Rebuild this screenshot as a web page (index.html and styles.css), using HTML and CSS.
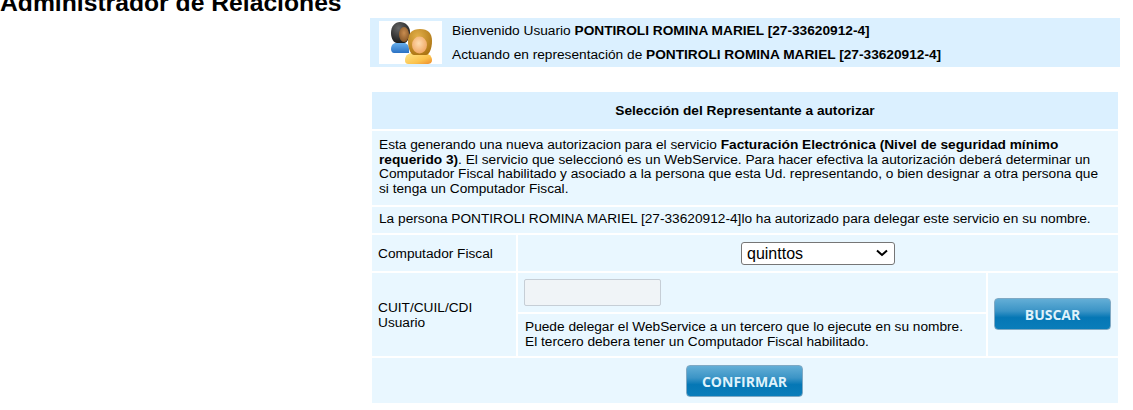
FILE: index.html
```html
<!DOCTYPE html>
<html lang="es">
<head>
<meta charset="utf-8">
<title>Administrador de Relaciones</title>
<link rel="stylesheet" href="styles.css">
</head>
<body>
<h1 class="page-title">Administrador de Relaciones</h1>
<main class="content">
  <section class="user-bar">
    <div class="avatar">
      <svg width="63" height="43" viewBox="0 0 63 43" aria-hidden="true">
        <defs>
          <linearGradient id="blueBody" x1="0" y1="0" x2="0" y2="1"><stop offset="0" stop-color="#6db4ef"/><stop offset="1" stop-color="#2b72c4"/></linearGradient>
          <linearGradient id="yellowBody" x1="0" y1="0" x2="1" y2="1"><stop offset="0" stop-color="#ffe98f"/><stop offset="0.65" stop-color="#fbc24c"/><stop offset="1" stop-color="#ec8a2c"/></linearGradient>
          <radialGradient id="darkHair" cx="0.4" cy="0.3" r="0.8"><stop offset="0" stop-color="#666"/><stop offset="1" stop-color="#111"/></radialGradient>
          <radialGradient id="goldHair" cx="0.4" cy="0.3" r="0.8"><stop offset="0" stop-color="#e3b04a"/><stop offset="1" stop-color="#a8700f"/></radialGradient>
          <radialGradient id="faceDark" cx="0.5" cy="0.4" r="0.7"><stop offset="0" stop-color="#c98d50"/><stop offset="1" stop-color="#7d4f22"/></radialGradient>
          <radialGradient id="faceLight" cx="0.45" cy="0.4" r="0.7"><stop offset="0" stop-color="#ffdcb0"/><stop offset="1" stop-color="#ee9f58"/></radialGradient>
        </defs>
        <path d="M12 28c0-5 4-7 9-7s9 2 9 7v4H15c-2 0-3-2-3-4z" fill="url(#blueBody)"/>
        <path d="M12 12C12 5 16 1 21 1s10 4 10 10c0 6-3 11-6 11h-7c-3 0-6-4-6-10z" fill="url(#darkHair)"/>
        <ellipse cx="25" cy="13.500" rx="5" ry="7.500" fill="url(#faceDark)"/>
        <path d="M26 39c0-5 4-8 13-8s14 3 14 8c0 3-2 4-5 4H30c-3 0-4-1-4-4z" fill="url(#yellowBody)"/>
        <path d="M29 20c0-8 4-12 12-12s12 4 12 12c0 8-3 14-6 14H35c-3 0-6-6-6-14z" fill="url(#goldHair)"/>
        <ellipse cx="40.500" cy="24" rx="7.500" ry="8.500" fill="url(#faceLight)"/>
      </svg>
    </div>
    <div class="user-lines">
      <p>Bienvenido Usuario <strong>PONTIROLI ROMINA MARIEL [27-33620912-4]</strong></p>
      <p>Actuando en representación de <strong>PONTIROLI ROMINA MARIEL [27-33620912-4]</strong></p>
    </div>
  </section>

  <section class="form-grid">
    <div class="cell heading span-all">Selección del Representante a autorizar</div>
    <div class="cell text span-all desc">Esta generando una nueva autorizacion para el servicio <strong>Facturación Electrónica (Nivel de seguridad mínimo requerido 3)</strong>. El servicio que seleccionó es un WebService. Para hacer efectiva la autorización deberá determinar un Computador Fiscal habilitado y asociado a la persona que esta Ud. representando, o bien designar a otra persona que si tenga un Computador Fiscal.</div>
    <div class="cell text span-all note">La persona PONTIROLI ROMINA MARIEL [27-33620912-4]lo ha autorizado para delegar este servicio en su nombre.</div>
    <div class="cell label">Computador Fiscal</div>
    <div class="cell select-cell">
      <select class="select"><option>quinttos</option></select>
    </div>
    <div class="cell label label-cuit">CUIT/CUIL/CDI<br>Usuario</div>
    <div class="middle">
      <div class="cell input-cell"><input class="input" type="text" disabled></div>
      <div class="cell help">Puede delegar el WebService a un tercero que lo ejecute en su nombre.<br>El tercero debera tener un Computador Fiscal habilitado.</div>
    </div>
    <div class="cell button-cell"><button class="btn" type="button">BUSCAR</button></div>
    <div class="cell confirm-cell span-all"><button class="btn" type="button">CONFIRMAR</button></div>
  </section>
</main>
</body>
</html>
```

FILE: styles.css
```css
* { box-sizing: border-box; }
html, body { margin: 0; padding: 0; }
body {
  background: #fff;
  color: #000;
  font-family: "Liberation Sans", Arial, sans-serif;
  font-size: 13.7px;
  height: 410px;
  overflow: hidden;
  display: flex;
  align-items: flex-start;
}
.page-title {
  flex: 0 0 370px;
  margin: -11px 0 0;
  font-size: 24.7px;
  font-weight: 700;
  line-height: 28px;
  white-space: nowrap;
}
.content {
  flex: 0 0 750px;
  padding-top: 18px;
}
.user-bar {
  display: flex;
  height: 49px;
  width: 750px;
  align-items: center;
  padding-left: 9px;
  background: #dbf0ff;
}
.avatar { width: 63px; height: 43px; background: #fff; flex: none; }
.avatar svg { display: block; }
.user-lines { margin-left: 10px; }
.user-lines p { margin: 0; line-height: 24px; }
.form-grid {
  margin: 25px 0 0 2px;
  width: 746px;
  display: grid;
  grid-template-columns: 144px 468px 130px;
  grid-template-rows: 37px 74px 26px 36px 83px 45px;
  gap: 2px;
}
.span-all { grid-column: 1 / -1; }
.cell { background: #e9f7ff; }
.heading {
  background: #dbf0ff;
  display: flex;
  align-items: center;
  justify-content: center;
  font-weight: 700;
}
.text { padding: 7px 7px 0; line-height: 14.6px; }
.note { padding-top: 5px; }
.label { display: flex; align-items: center; padding-left: 6px; }
.label-cuit { line-height: 15px; }
.select-cell {
  grid-column: 2 / -1;
  display: flex;
  align-items: center;
  justify-content: center;
}
.select {
  appearance: none;
  width: 154px;
  height: 23px;
  padding: 0 0 0 5px;
  font-family: "Liberation Sans", Arial, sans-serif;
  font-size: 16px;
  background-color: #fff;
  background-image: url("data:image/svg+xml,%3Csvg xmlns='http://www.w3.org/2000/svg' width='12' height='8' viewBox='0 0 12 8'%3E%3Cpath d='M1 1.500l5 4.500 5-4.500' fill='none' stroke='%23000' stroke-width='2'/%3E%3C/svg%3E");
  background-repeat: no-repeat;
  background-position: right 6px center;
  border: 1px solid #767676;
  border-radius: 3px;
  color: #000;
}
.middle {
  display: grid;
  grid-template-rows: 39px 42px;
  gap: 2px;
}
.input-cell { padding: 6px 0 0 6px; }
.input {
  display: block;
  width: 137px;
  height: 27px;
  background: #f0f4f7;
  border: 1px solid #c6ced6;
  border-radius: 2px;
  padding: 0;
}
.help { padding: 6px 0 0 7px; line-height: 14.6px; }
.button-cell {
  display: flex;
  align-items: flex-start;
  padding: 25px 0 0 6px;
}
.confirm-cell {
  display: flex;
  justify-content: center;
  padding-top: 7px;
  padding-right: 1px;
}
.btn {
  width: 117px;
  height: 32px;
  padding: 0;
  border: 1px solid #7fa9c4;
  border-radius: 4px;
  background: linear-gradient(to bottom, #63aed6 0%, #3b94c6 40%, #0577b5 62%, #0a7dba 100%);
  color: #dff2fb;
  font-family: "Open Sans", "Liberation Sans", sans-serif;
  font-size: 14px;
  font-weight: 700;
}
```
